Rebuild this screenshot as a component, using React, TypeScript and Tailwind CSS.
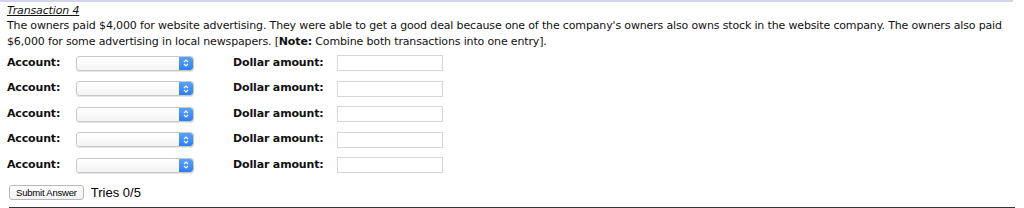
export default function App() {
  const rows = [0, 1, 2, 3, 4];
  return (
    <div className="h-[208px] w-[1024px] overflow-hidden bg-white font-['DejaVu_Sans',sans-serif] text-[11px] tracking-[-0.15px] text-[#111]">
      <div className="h-[2px] w-[1013px] bg-[#d4d4ee]" />
      <div className="px-[7px] pt-[2px]">
        <div className="italic underline leading-[13px]">Transaction 4</div>
        <p className="mt-[1px] leading-[16px]">
          The owners paid $4,000 for website advertising. They were able to get a good deal because one of the company's owners also owns stock in the website company. The owners also paid $6,000 for some advertising in local newspapers. [<b>Note:</b> Combine both transactions into one entry].
        </p>
        <div className="mt-[5px] flex flex-col gap-[9.5px]">
          {rows.map((r) => (
            <div key={r} className="flex h-[16px] items-center">
              <span className="w-[69px] font-bold">Account:</span>
              <div className="flex h-[15px] w-[118px] items-stretch overflow-hidden rounded-[3px] border border-[#c8c8c8] bg-gradient-to-b from-white to-[#f4f4f4] shadow-[0_1px_0_#e6e6e6]">
                <div className="flex-1" />
                <div className="flex w-[14px] flex-col items-center justify-center rounded-r-[3px] bg-gradient-to-b from-[#5aa2f8] to-[#2c7ef0]">
                  <svg width="6" height="10" viewBox="0 0 6 10" fill="none" stroke="white" strokeWidth="1.2">
                    <path d="M1 4 L3 2 L5 4" />
                    <path d="M1 6 L3 8 L5 6" />
                  </svg>
                </div>
              </div>
              <span className="ml-[39px] w-[104px] font-bold">Dollar amount:</span>
              <div className="h-[16px] w-[106px] border border-[#d6d6d6] bg-white" />
            </div>
          ))}
        </div>
        <div className="mt-[10px] flex items-center">
          <button className="ml-[2px] h-[15px] rounded-[3px] border border-[#b8b8b8] bg-gradient-to-b from-white to-[#f2f2f2] px-[6px] font-['Liberation_Sans',sans-serif] text-[9.5px] leading-[13px] tracking-[-0.2px] text-black">
            Submit Answer
          </button>
          <span className="ml-[7px] font-['Liberation_Sans',sans-serif] text-[13px] tracking-normal text-black">Tries 0/5</span>
        </div>
        <div className="ml-[2px] mt-[4px] h-[10px] w-[1006px] border-l border-t border-r border-[#333] bg-[#f0f0f0]" />
      </div>
    </div>
  );
}
